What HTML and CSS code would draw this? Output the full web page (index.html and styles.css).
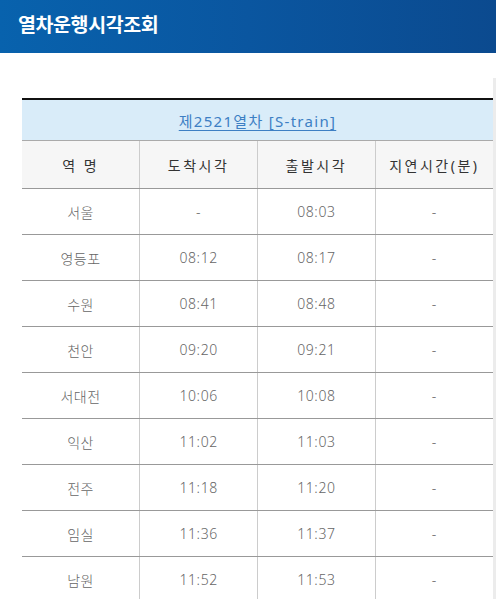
FILE: index.html
```html
<!DOCTYPE html>
<html lang="ko">
<head>
<meta charset="utf-8">
<title>열차운행시각조회</title>
<link rel="stylesheet" href="styles.css">
</head>
<body>
<header class="topbar"><h1 class="title">열차운행시각조회</h1></header>
<main class="content">
  <table class="timetable">
    <thead>
      <tr><th colspan="4" class="caption"><a href="#">제2521열차 [S-train]</a></th></tr>
      <tr class="head"><th>역 명</th><th>도착시각</th><th>출발시각</th><th>지연시간(분)</th></tr>
    </thead>
    <tbody>
      <tr><td>서울</td><td>-</td><td>08:03</td><td>-</td></tr>
      <tr><td>영등포</td><td>08:12</td><td>08:17</td><td>-</td></tr>
      <tr><td>수원</td><td>08:41</td><td>08:48</td><td>-</td></tr>
      <tr><td>천안</td><td>09:20</td><td>09:21</td><td>-</td></tr>
      <tr><td>서대전</td><td>10:06</td><td>10:08</td><td>-</td></tr>
      <tr><td>익산</td><td>11:02</td><td>11:03</td><td>-</td></tr>
      <tr><td>전주</td><td>11:18</td><td>11:20</td><td>-</td></tr>
      <tr><td>임실</td><td>11:36</td><td>11:37</td><td>-</td></tr>
      <tr><td>남원</td><td>11:52</td><td>11:53</td><td>-</td></tr>
    </tbody>
  </table>
</main>
</body>
</html>
```
FILE: styles.css
```css
html, body { margin: 0; padding: 0; background: #fff; }
body { font-family: "Noto Sans", "Noto Sans CJK KR", sans-serif; overflow: hidden; }
.topbar {
  height: 53px;
  background: linear-gradient(to right, #0862ad 0%, #0a56a0 50%, #0b4a8f 100%);
  display: flex;
  align-items: center;
  padding-left: 18px;
}
.title {
  margin: 0;
  color: #fff;
  font-family: "Noto Sans CJK KR", sans-serif;
  font-size: 19.5px;
  font-weight: 700;
  letter-spacing: -0.4px;
  line-height: 1;
  position: relative;
  top: -3px;
}
.content {
  margin-top: 25px;
  padding: 20px 0 40px 22px;
  border-right: 3px solid #ececec;
  width: 471px;
}
.timetable {
  width: 471px;
  border-collapse: collapse;
  table-layout: fixed;
  border-top: 2px solid #111;
}
.caption {
  height: 40px;
  padding: 0;
  background: #d9ecf9;
  border-bottom: 1px solid #aaa;
  font-weight: 400;
  font-size: 15px;
}
.caption a { color: #3d7fc4; text-decoration: underline; text-underline-offset: 3px; letter-spacing: 1.3px; }
.head th {
  height: 47px;
  padding: 0;
  background: #f6f6f6;
  color: #333;
  font-size: 14px;
  font-weight: 400;
  letter-spacing: 2.5px;
  border-bottom: 1px solid #999;
  border-left: 1px solid #ccc;
}
.head th:first-child, td:first-child { border-left: none; }
td {
  height: 45px;
  padding: 0;
  text-align: center;
  color: #666;
  font-size: 14px;
  font-weight: 300;
  letter-spacing: 0.6px;
  border-bottom: 1px solid #999;
  border-left: 1px solid #ccc;
}
```
